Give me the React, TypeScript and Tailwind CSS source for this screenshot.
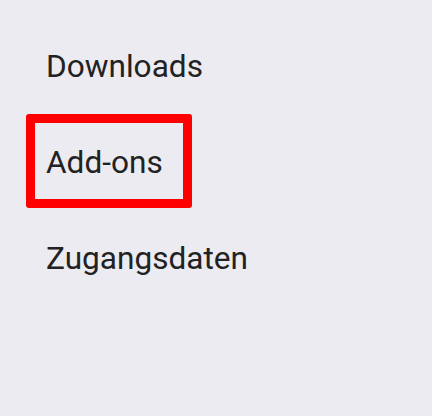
export default function App() {
  return (
    <div
      className="w-full h-[416px] bg-[#ECEBF1] pt-[17px] flex flex-col text-[#222222] text-[31.6px]"
      style={{ fontFamily: 'Roboto, "Noto Sans", sans-serif' }}
    >
      <div className="h-[96px] flex items-center pl-[46px] pt-[3px] leading-none">Downloads</div>
      <div className="mt-[1px] mb-[1px] ml-[26px] w-[166px] h-[94px] box-border border-[9px] border-[#FF0000] rounded-[3px] flex items-center pl-[11px] pt-[3px] leading-none">
        Add-ons
      </div>
      <div className="h-[96px] flex items-center pl-[46px] pt-[3px] leading-none">Zugangsdaten</div>
    </div>
  );
}
